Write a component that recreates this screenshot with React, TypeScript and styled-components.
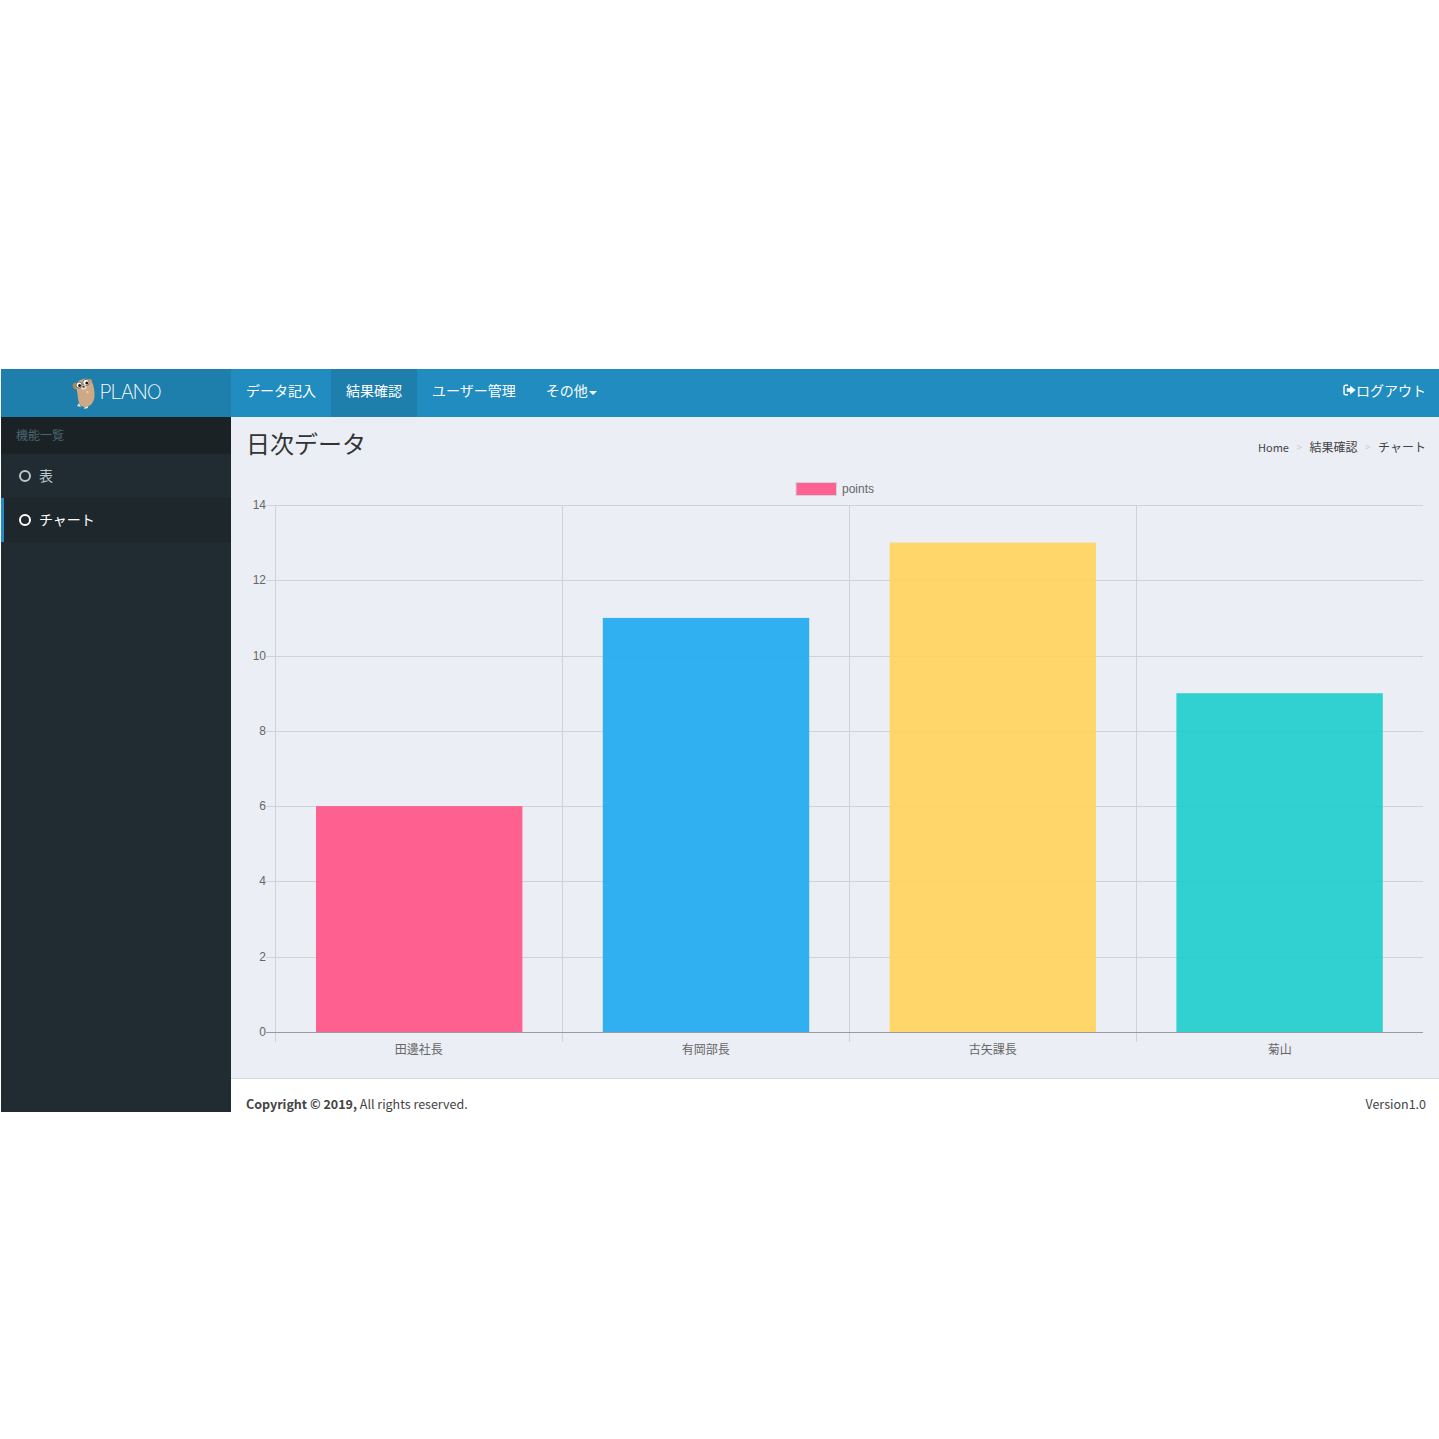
import React from 'react'
import styled, { createGlobalStyle } from 'styled-components'

const GlobalStyle = createGlobalStyle`
  html, body {
    margin: 0;
    padding: 0;
    background: #fff;
    font-family: "Noto Sans CJK JP", "Liberation Sans", sans-serif;
  }
  * { box-sizing: border-box; }
`

const Page = styled.div`
  height: 1439px;
  padding: 369px 0 327px 1px;
  display: flex;
  flex-direction: column;
`

const TopBar = styled.header`
  display: flex;
  height: 48px;
  flex: none;
  background: #218cbf;
  color: #fff;
`

const Brand = styled.div`
  width: 230px;
  flex: none;
  background: #1e7fad;
  display: flex;
  align-items: center;
  justify-content: center;
  gap: 2px;
  padding-bottom: 2px;
  font-family: "Inter", "Liberation Sans", sans-serif;
  font-weight: 200;
  font-size: 20px;
  letter-spacing: -1.2px;

  svg {
    margin-top: 2px;
  }
`

const NavList = styled.nav`
  display: flex;
  flex: 1;
`

const NavItem = styled.a<{ $active?: boolean }>`
  display: flex;
  align-items: center;
  padding: 0 15px 6px;
  font-size: 14px;
  background: ${p => (p.$active ? '#1e7fad' : 'transparent')};
`

const Caret = styled.span`
  width: 0;
  height: 0;
  margin: 5px 0 0 1px;
  border-top: 4px solid #fff;
  border-left: 4px solid transparent;
  border-right: 4px solid transparent;
`

const Logout = styled.a`
  display: flex;
  align-items: center;
  padding: 0 13px 6px 0;
  font-size: 14px;
`

const Main = styled.div`
  display: grid;
  grid-template-columns: 230px 1fr;
  flex: 1;
  min-height: 0;
`

const Sidebar = styled.aside`
  background: #202c32;
`

const SideHeader = styled.div`
  height: 37px;
  padding: 0 15px 3px;
  display: flex;
  align-items: center;
  background: #1a2226;
  color: #4b646f;
  font-size: 12px;
`

const SideItem = styled.a<{ $active?: boolean }>`
  height: 44px;
  display: flex;
  align-items: center;
  gap: 8px;
  padding: 0 0 2px 15px;
  font-size: 14px;
  border-left: 3px solid ${p => (p.$active ? '#218cbf' : 'transparent')};
  background: ${p => (p.$active ? '#1e282c' : 'transparent')};
  color: ${p => (p.$active ? '#fff' : '#b8c7ce')};
`

const Ring = styled.span`
  width: 12px;
  height: 12px;
  margin-top: 2px;
  border: 2px solid currentColor;
  border-radius: 50%;
`

const Content = styled.div`
  display: flex;
  flex-direction: column;
  min-height: 0;
`

const Body = styled.main`
  flex: 1;
  background: #ebeef5;
`

const TitleRow = styled.div`
  height: 58px;
  padding: 7px 13px 0 15px;
  display: flex;
  justify-content: space-between;
  align-items: flex-start;
`

const Title = styled.h1`
  margin: 0;
  font-size: 24px;
  font-weight: 400;
  line-height: 38px;
  color: #333;
`

const Breadcrumb = styled.div`
  display: flex;
  align-items: center;
  gap: 7.5px;
  margin-top: 13px;
  font-size: 12px;
  line-height: 20px;
  color: #444;
`

const Crumb = styled.span<{ $small?: boolean }>`
  font-size: ${p => (p.$small ? '11px' : '12px')};
`

const Sep = styled.span`
  color: #ccc;
  font-size: 10px;
`

const Chart = styled.svg`
  display: block;
`

const Footer = styled.footer`
  height: 34px;
  flex: none;
  background: #fff;
  border-top: 1px solid #d2d6de;
  padding: 17px 13px 0 15px;
  display: flex;
  justify-content: space-between;
  font-size: 12.5px;
  line-height: 16px;
  color: #444;
`

const Gopher = () => (
  <svg width="26" height="32" viewBox="0 0 26 32">
    <path d="M8 26 L6 29 L10 30 Z M14 29 L13 32 L17 31 L17 28 Z" fill="#e9dfd0" />
    <ellipse cx="4.5" cy="9" rx="2.8" ry="3.2" fill="#a98763" transform="rotate(-20 4.5 9)" />
    <circle cx="19" cy="4" r="2.2" fill="#a98763" />
    <path d="M4.5 8 C6 4 12 1 17 2 C22 3 23 10 23.5 16 C24 22 22 27 18 29 C15 31 10 30 8.5 27 C6.5 23 7 18 6 14 Z" fill="#cfa985" />
    <circle cx="8" cy="8" r="3" fill="#fff" stroke="#4a4038" strokeWidth="0.7" />
    <circle cx="15" cy="5.5" r="3.2" fill="#fff" stroke="#4a4038" strokeWidth="0.7" />
    <circle cx="8.6" cy="8.4" r="1.5" fill="#1f1c1a" />
    <circle cx="15.8" cy="6" r="1.5" fill="#1f1c1a" />
    <ellipse cx="13" cy="10.5" rx="2.8" ry="2" fill="#e6d8c4" transform="rotate(-15 13 10.5)" />
    <ellipse cx="12.6" cy="9.8" rx="1.3" ry="0.9" fill="#4a3a30" />
    <circle cx="16.5" cy="15" r="1.1" fill="#e4d3bf" />
  </svg>
)

const SignOut = () => (
  <svg width="13" height="12" viewBox="0 0 13 12">
    <path d="M5 1.2 H2.6 C1.7 1.2 1 1.9 1 2.8 V9.2 C1 10.1 1.7 10.8 2.6 10.8 H5" fill="none" stroke="#fff" strokeWidth="1.4" />
    <path d="M3.8 4.2 H7.2 V1.5 L12.6 6 L7.2 10.5 V7.8 H3.8 Z" fill="#fff" />
  </svg>
)

// fills carry some alpha so the grid shows faintly through the bars
const bars = [
  { label: '田邊社長', value: 6, color: '#ff5688' },
  { label: '有岡部長', value: 11, color: '#21abf0' },
  { label: '古矢課長', value: 13, color: '#ffd45e' },
  { label: '菊山', value: 9, color: '#22cdcd' },
]

const left = 275
const right = 1423
const top = 505
const bottom = 1032
const cell = (right - left) / 4
const yOf = (v: number) => bottom - ((bottom - top) * v) / 14
const grid = '#d0d2d6'
const labelFont = '"Liberation Sans", "Noto Sans CJK JP", sans-serif'

const BarChart = () => (
  <Chart width="1208" height="590" viewBox="231 475 1208 590">
    <rect x="796" y="482.5" width="40.5" height="13" fill="#ff6190" stroke="#d0d3d9" />
    <text x="842" y="493" fontSize="12" fill="#666" fontFamily={labelFont}>points</text>
    {[2, 4, 6, 8, 10, 12, 14].map(v => (
      <g key={v}>
        <line x1={left - 9} x2={right} y1={Math.round(yOf(v)) + 0.5} y2={Math.round(yOf(v)) + 0.5} stroke={grid} />
        <text x="266" y={yOf(v) + 4} textAnchor="end" fontSize="12" fill="#666" fontFamily={labelFont}>{v}</text>
      </g>
    ))}
    {[0, 1, 2, 3].map(i => (
      <line key={i} x1={left + cell * i + 0.5} x2={left + cell * i + 0.5} y1={top} y2={1042} stroke={grid} />
    ))}
    {bars.map((b, i) => (
      <g key={b.label}>
        <rect x={left + cell * i + 41 - 0.2 * i} y={yOf(b.value)} width="206.4" height={bottom - yOf(b.value)} fill={b.color} fillOpacity="0.93" />
        <text x={left + cell * (i + 0.5) + 0.2} y="1054" textAnchor="middle" fontSize="12" fill="#666" fontFamily={labelFont}>{b.label}</text>
      </g>
    ))}
    <line x1={left - 9} x2={right} y1={bottom + 0.5} y2={bottom + 0.5} stroke="#9a9a9a" />
    <text x="266" y={bottom + 4} textAnchor="end" fontSize="12" fill="#666" fontFamily={labelFont}>0</text>
  </Chart>
)

export default function App() {
  return (
    <Page>
      <GlobalStyle />
      <TopBar>
        <Brand>
          <Gopher />
          PLANO
        </Brand>
        <NavList>
          <NavItem>データ記入</NavItem>
          <NavItem $active>結果確認</NavItem>
          <NavItem>ユーザー管理</NavItem>
          <NavItem>その他<Caret /></NavItem>
        </NavList>
        <Logout><SignOut />ログアウト</Logout>
      </TopBar>
      <Main>
        <Sidebar>
          <SideHeader>機能一覧</SideHeader>
          <SideItem><Ring />表</SideItem>
          <SideItem $active><Ring />チャート</SideItem>
        </Sidebar>
        <Content>
          <Body>
            <TitleRow>
              <Title>日次データ</Title>
              <Breadcrumb>
                <Crumb $small>Home</Crumb>
                <Sep>&gt;</Sep>
                <Crumb>結果確認</Crumb>
                <Sep>&gt;</Sep>
                <Crumb>チャート</Crumb>
              </Breadcrumb>
            </TitleRow>
            <BarChart />
          </Body>
          <Footer>
            <span><b>Copyright © 2019,</b> All rights reserved.</span>
            <span>Version1.0</span>
          </Footer>
        </Content>
      </Main>
    </Page>
  )
}
